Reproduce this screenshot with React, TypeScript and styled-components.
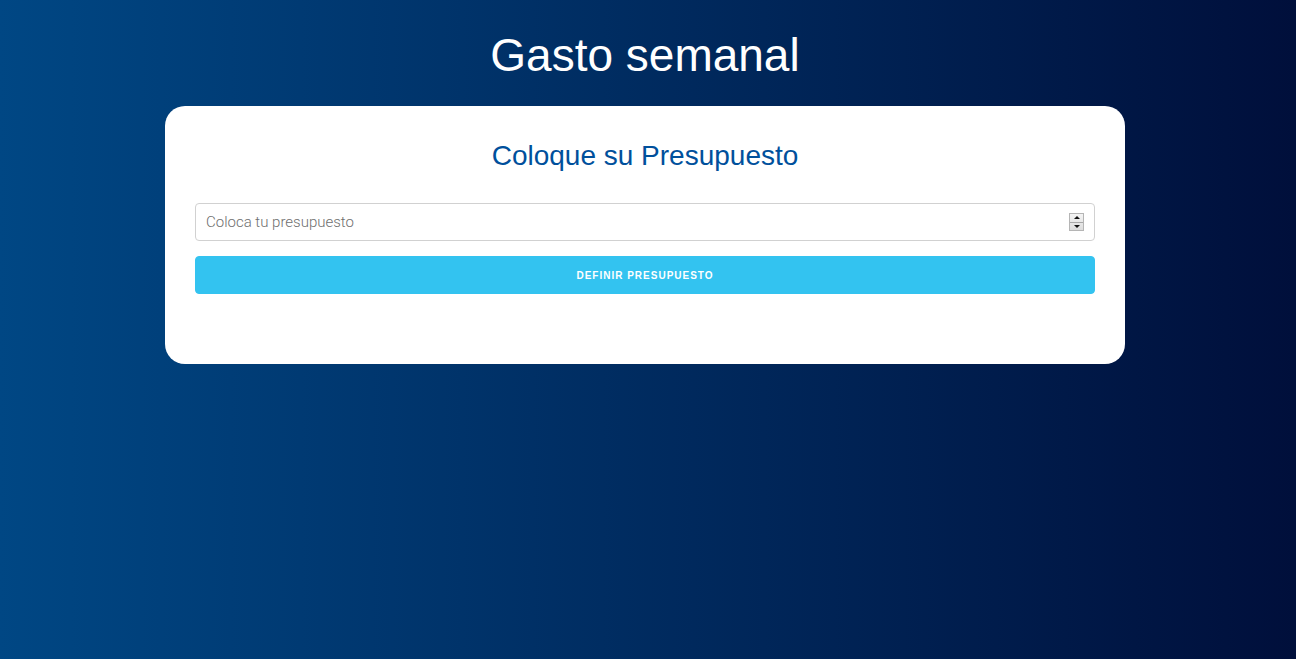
import React from "react";
import styled, { createGlobalStyle } from "styled-components";

const GlobalStyle = createGlobalStyle`
  html, body { margin: 0; padding: 0; }
  body { font-family: "Liberation Sans", Arial, sans-serif; }
  * { box-sizing: border-box; }
`;

const Page = styled.div`
  min-height: 100vh;
  background: linear-gradient(to right, #004784, #000f3b);
  padding: 0 6px 40px 0;
  display: flex;
  flex-direction: column;
  align-items: center;
`;

const Title = styled.h1`
  margin: 29px 0 24px;
  font-family: "Liberation Sans", Arial, sans-serif;
  font-weight: 400;
  font-size: 46px;
  line-height: 53px;
  color: #ffffff;
  text-align: center;
`;

const Card = styled.div`
  width: 960px;
  background: #ffffff;
  border-radius: 20px;
  padding: 34px 30px 70px;
  display: flex;
  flex-direction: column;
`;

const Subtitle = styled.h2`
  margin: 0 0 31px;
  font-family: "Liberation Sans", Arial, sans-serif;
  font-weight: 400;
  font-size: 28px;
  line-height: 32px;
  color: #00509c;
  text-align: center;
`;

const Form = styled.form`
  display: flex;
  flex-direction: column;
  gap: 15px;
`;

const Field = styled.div`
  position: relative;
  height: 38px;
`;

const Input = styled.input`
  height: 38px;
  width: 100%;
  padding: 6px 32px 6px 10px;
  border: 1px solid #d1d1d1;
  border-radius: 4px;
  background: #fff;
  font-family: Roboto, "Liberation Sans", sans-serif;
  font-weight: 300;
  font-size: 15px;
  color: #333;
  outline: none;
  -moz-appearance: textfield;
  &::placeholder {
    color: #6f6f6f;
    font-weight: 300;
  }
  &::-webkit-inner-spin-button,
  &::-webkit-outer-spin-button {
    -webkit-appearance: none;
    margin: 0;
  }
`;

const Spinner = styled.div`
  position: absolute;
  right: 11px;
  top: 10px;
  width: 15px;
  height: 18px;
  display: flex;
  flex-direction: column;
  border: 1px solid #b5b5b5;
  background: linear-gradient(#f4f4f4, #dcdcdc);
`;

const SpinHalf = styled.div<{ $down?: boolean }>`
  flex: 1;
  display: flex;
  align-items: center;
  justify-content: center;
  border-top: ${(p) => (p.$down ? "1px solid #a8a8a8" : "none")};
  &::after {
    content: "";
    width: 0;
    height: 0;
    border-left: 3px solid transparent;
    border-right: 3px solid transparent;
    ${(p) =>
      p.$down ? "border-top: 3px solid #111;" : "border-bottom: 3px solid #111;"}
  }
`;

const Button = styled.button`
  height: 38px;
  width: 100%;
  border: 1px solid #33c3f0;
  border-radius: 4px;
  background: #33c3f0;
  color: #ffffff;
  font-family: "Liberation Sans", Arial, sans-serif;
  font-weight: 700;
  font-size: 10px;
  letter-spacing: 1px;
  text-transform: uppercase;
  cursor: pointer;
`;

export default function App() {
  return (
    <>
      <GlobalStyle />
      <Page>
        <Title>Gasto semanal</Title>
        <Card>
          <Subtitle>Coloque su Presupuesto</Subtitle>
          <Form onSubmit={(e) => e.preventDefault()}>
            <Field>
              <Input type="number" placeholder="Coloca tu presupuesto" />
              <Spinner aria-hidden="true">
                <SpinHalf />
                <SpinHalf $down />
              </Spinner>
            </Field>
            <Button type="submit">Definir Presupuesto</Button>
          </Form>
        </Card>
      </Page>
    </>
  );
}
